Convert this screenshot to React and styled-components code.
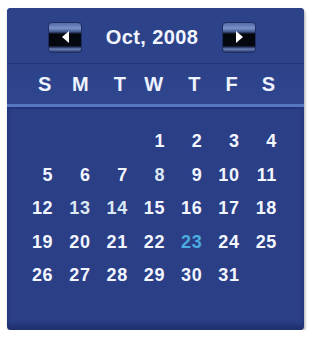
import styled, { createGlobalStyle } from 'styled-components';

const GlobalStyle = createGlobalStyle`
  body {
    margin: 0;
    background: #ffffff;
    font-family: "Liberation Sans", Arial, sans-serif;
  }
`;

const Page = styled.div`
  padding: 8px 0 0 7px;
`;

const Panel = styled.div`
  width: 297px;
  height: 322px;
  background: #2b3f87;
  border-radius: 4px;
  box-shadow: 1px 2px 3px rgba(0, 0, 0, 0.35), inset 0 -5px 4px rgba(10, 20, 60, 0.35);
  display: flex;
  flex-direction: column;
  overflow: hidden;
`;

const TitleRow = styled.div`
  height: 56px;
  display: grid;
  grid-template-columns: 34px 140px 34px;
  align-items: center;
  padding: 3px 0 0 41px;
  box-sizing: border-box;
  background: #2d4389;
  border-bottom: 1px solid #22357a;
`;

const NavButton = styled.button`
  width: 34px;
  height: 31px;
  padding: 0;
  border: 1px solid #1f2d62;
  border-radius: 4px;
  background: linear-gradient(
    to bottom,
    #5069a8 0%,
    #7a92c8 18%,
    #41578f 30%,
    #05070f 38%,
    #05070f 78%,
    #2b3a68 84%,
    #6d82b8 90%,
    #26386e 100%
  );
  display: flex;
  align-items: center;
  justify-content: center;
  cursor: pointer;
`;

const Title = styled.div`
  text-align: center;
  color: #f2f5ff;
  font-size: 20px;
  font-weight: bold;
  letter-spacing: 0.4px;
`;

const WeekRow = styled.div`
  height: 40px;
  display: grid;
  grid-template-columns: repeat(7, 37.3px);
  align-items: center;
  padding-left: 9px;
  background: linear-gradient(to bottom, #2c4188, #2f468f);
  border-bottom: 3px solid #5877bf;
  box-shadow: 0 2px 0 #22357a;
`;

const WeekDay = styled.div`
  text-align: right;
  padding-right: 2px;
  color: #eef3ff;
  font-size: 20px;
  font-weight: bold;
`;

const DaysGrid = styled.div`
  display: grid;
  grid-template-columns: repeat(7, 37.3px);
  grid-auto-rows: 33.5px;
  align-items: center;
  padding: 18px 0 0 9px;
`;

const Day = styled.div`
  text-align: right;
  font-size: 18px;
  font-weight: bold;
  letter-spacing: 0.7px;
  color: ${(p) => (p.$today ? '#4bacdf' : p.$soft ? '#dbe9f4' : '#f3f6ff')};
`;

function Arrow({ dir }) {
  const points = dir === 'left' ? '9,2 9,14 2,8' : '2,2 2,14 9,8';
  return (
    <svg width="11" height="16" viewBox="0 0 11 16">
      <polygon points={points} fill="#ffffff" />
    </svg>
  );
}

const weekDays = ['S', 'M', 'T', 'W', 'T', 'F', 'S'];
const soft = [8, 13, 14];

export default function App() {
  const cells = [null, null, null];
  for (let d = 1; d <= 31; d++) cells.push(d);

  return (
    <>
      <GlobalStyle />
      <Page>
        <Panel>
          <TitleRow>
            <NavButton aria-label="Previous month">
              <Arrow dir="left" />
            </NavButton>
            <Title>Oct, 2008</Title>
            <NavButton aria-label="Next month">
              <Arrow dir="right" />
            </NavButton>
          </TitleRow>
          <WeekRow>
            {weekDays.map((w, i) => (
              <WeekDay key={i}>{w}</WeekDay>
            ))}
          </WeekRow>
          <DaysGrid>
            {cells.map((d, i) => (
              <Day key={i} $today={d === 23} $soft={soft.includes(d)}>
                {d}
              </Day>
            ))}
          </DaysGrid>
        </Panel>
      </Page>
    </>
  );
}
